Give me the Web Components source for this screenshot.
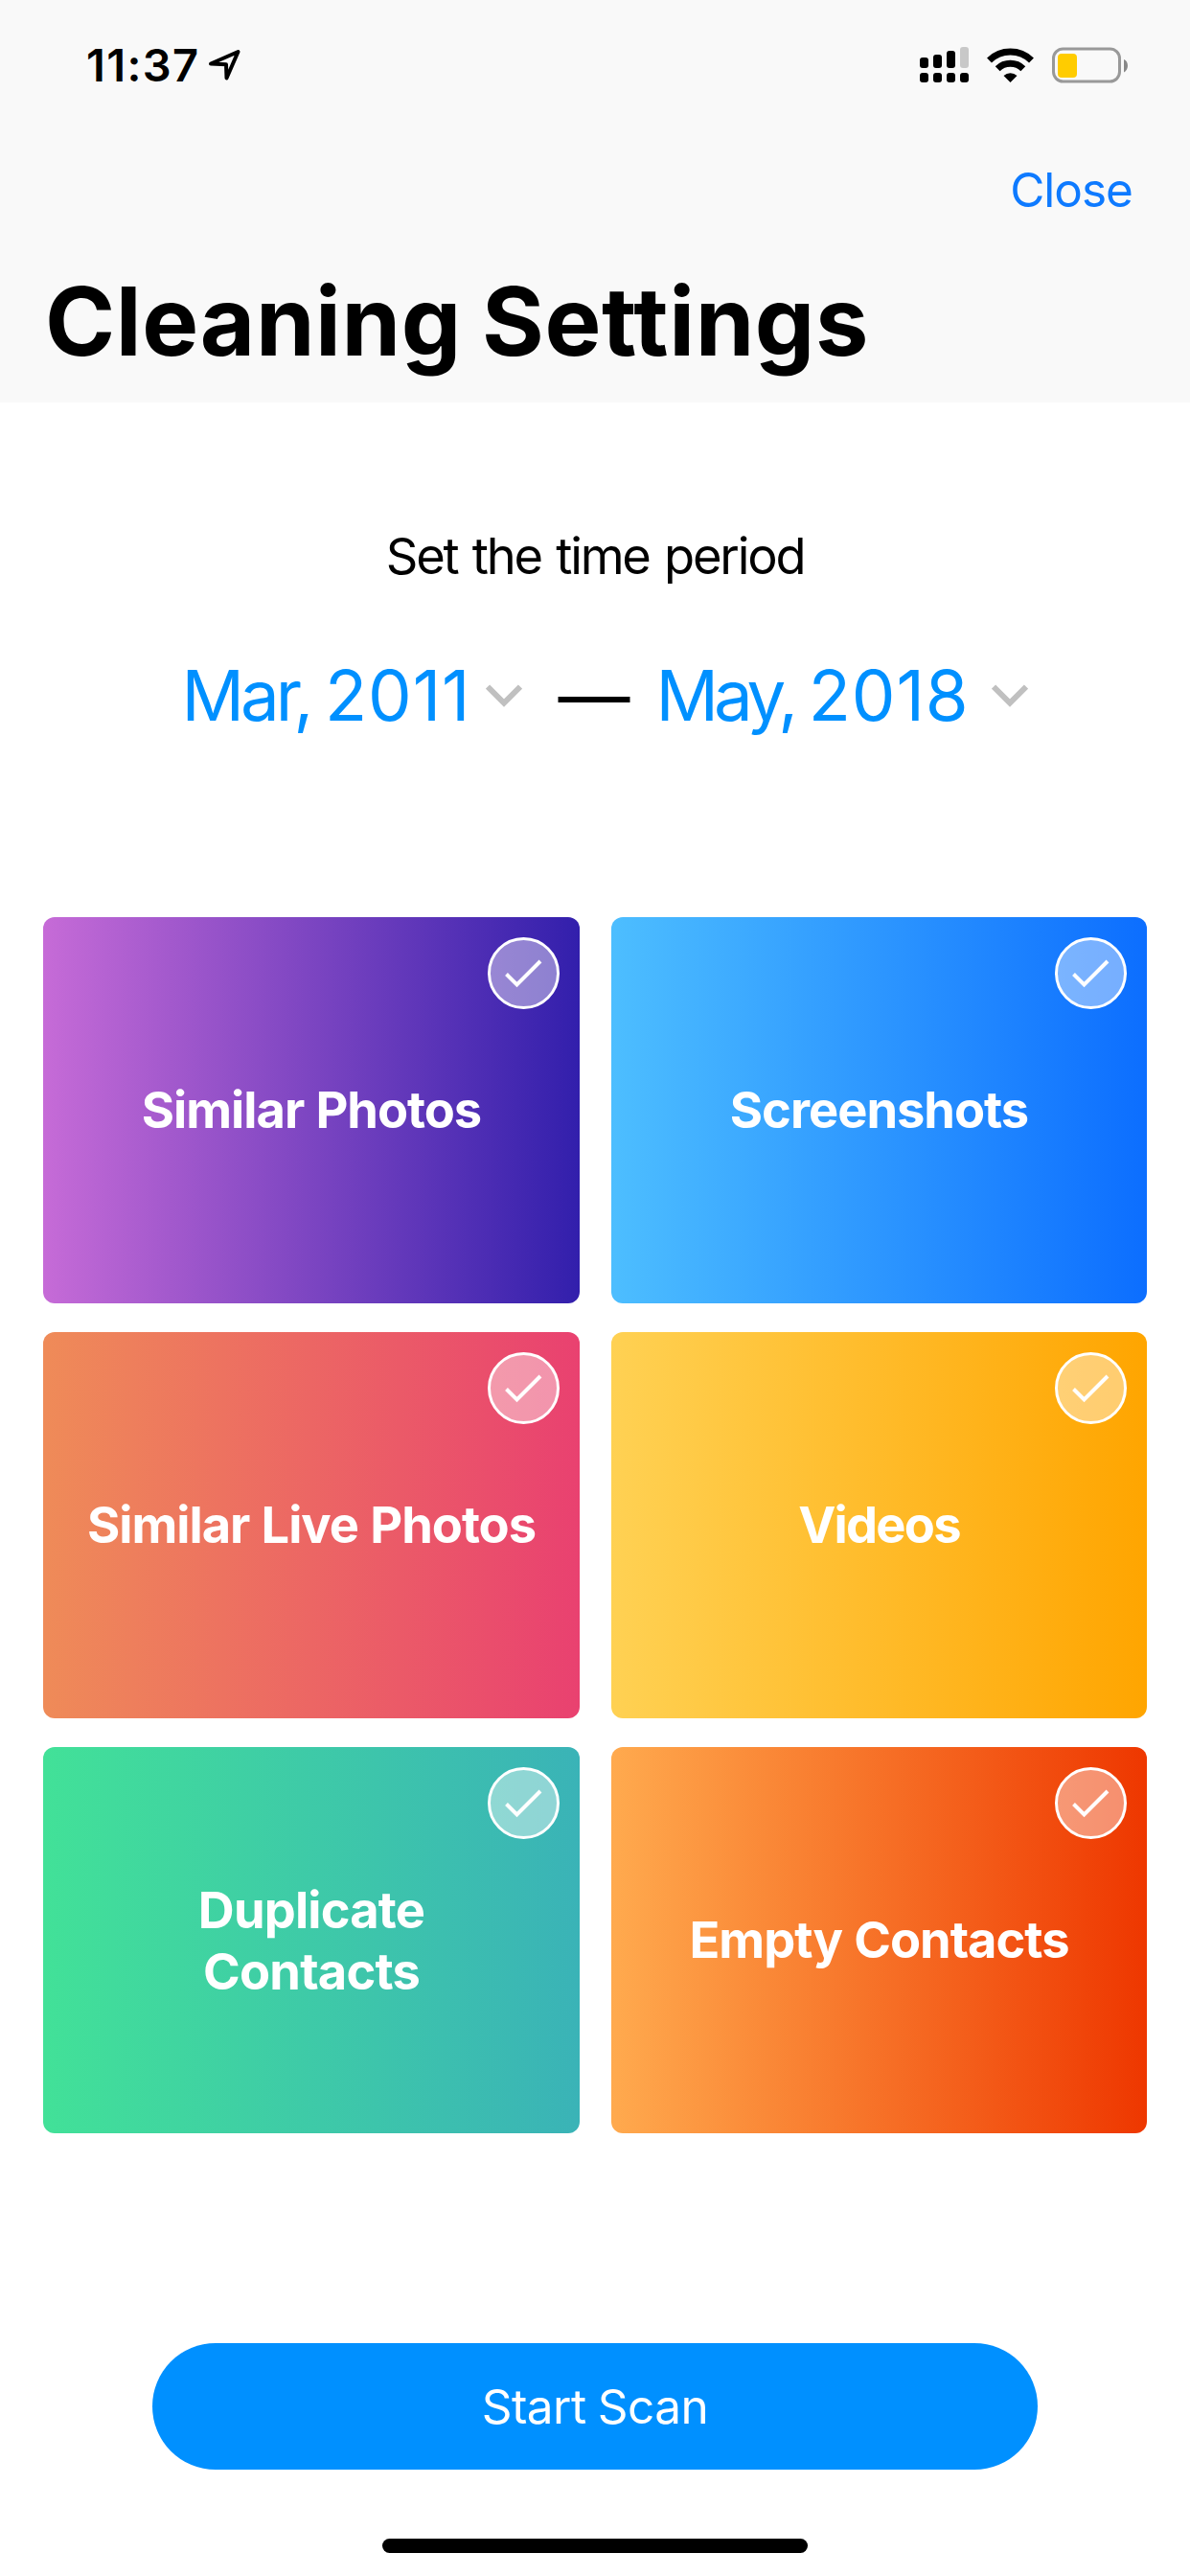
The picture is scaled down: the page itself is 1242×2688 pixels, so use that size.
<!DOCTYPE html>
<html lang="en">
<head>
<meta charset="utf-8">
<title>Cleaning Settings</title>
<style>
    html, body {
        margin: 0;
        background: #fff;
    }

    body {
        width: 1242px;
        height: 2688px;
        overflow: hidden;
        color: #000;
        font-family: Inter, "Liberation Sans", sans-serif;
        --clr-link: #0e7aff;
        --clr-accent: #0090ff;
        --clr-bar: #f9f9f9;
    }
</style>
</head>
<body>

<cleaning-screen>
    <status-bar slot="header" time="11:37"></status-bar>
    <nav-bar slot="header" action="Close">Cleaning Settings</nav-bar>

    <time-period label="Set the time period">
        <date-picker style="--gap: 16px; --track: -4px"><span>Mar,</span> 2011</date-picker>
        <date-picker slot="end" style="--gap: 23px; --track: -5px"><span>May,</span> 2018</date-picker>
    </time-period>

    <category-grid>
        <category-card from="#c66bd7" to="#321fac">Similar Photos</category-card>
        <category-card from="#4dbeff" to="#0c6eff">Screenshots</category-card>
        <category-card from="#ef8b58" to="#e94170">Similar Live Photos</category-card>
        <category-card from="#ffd153" to="#ffa500" style="--track: -1.74px">Videos</category-card>
        <category-card from="#42e198" to="#3ab3b7" style="--track: -0.8px; padding-bottom: 0">Duplicate<br>Contacts</category-card>
        <category-card from="#ffaa4e" to="#ee3700">Empty Contacts</category-card>
    </category-grid>

    <scan-button slot="footer">Start Scan</scan-button>
    <home-indicator slot="footer"></home-indicator>
</cleaning-screen>

<script>
class CleaningScreen extends HTMLElement {
    constructor() {
        super();
        const host = this.attachShadow({ mode: 'open' });
        host.innerHTML = `
            <style>
            :host {
                display: flex;
                flex-direction: column;
                height: 2688px;
            }

            header {
                height: 420px;
                background: var(--clr-bar);
            }

            main {
                flex: 1;
            }

            footer {
                display: flex;
                flex-direction: column;
                align-items: center;
                gap: 72px;
                padding-bottom: 24px;
            }
            </style>
            <header><slot name="header"></slot></header>
            <main><slot></slot></main>
            <footer><slot name="footer"></slot></footer>
        `;
    }
}

class StatusBar extends HTMLElement {
    constructor() {
        super();
        const host = this.attachShadow({ mode: 'open' });
        host.innerHTML = `
            <style>
            :host {
                display: flex;
                align-items: center;
                justify-content: space-between;
                box-sizing: border-box;
                height: 132px;
                padding: 4px 64px 0 90px;
            }

            .left, .right {
                display: flex;
                align-items: center;
            }

            .time {
                font-size: 47px;
                font-weight: 600;
                line-height: 56px;
                letter-spacing: 1.34px;
            }

            .arrow { margin-left: 8px; }
            .wifi { margin: 0 19px 0 18px; }
            svg { display: block; }
            </style>
            <div class="left">
                <span class="time"></span>
                <svg class="arrow" width="36" height="36" viewBox="0 0 36 36">
                    <path d="M4 16.500 L32.500 4 L20.500 31.500 L20 17.200 Z" fill="none" stroke="#000" stroke-width="4" stroke-linejoin="round"/>
                </svg>
            </div>
            <div class="right">
                <svg width="52" height="38" viewBox="0 0 52 38">
                    <rect x="0" y="11" width="9" height="11" rx="3"/>
                    <rect x="14" y="8" width="9" height="14" rx="3"/>
                    <rect x="28" y="4" width="9" height="18" rx="3"/>
                    <rect x="42" y="0" width="9" height="22" rx="3" fill="#c8c8c8"/>
                    <rect x="0" y="27" width="9" height="10" rx="3"/>
                    <rect x="14" y="27" width="9" height="10" rx="3"/>
                    <rect x="28" y="27" width="9" height="10" rx="3"/>
                    <rect x="42" y="27" width="9" height="10" rx="3"/>
                </svg>
                <svg class="wifi" width="49" height="38" viewBox="0 0 49 38">
                    <g fill="none" stroke="#000" stroke-width="7">
                        <path d="M2.500 14 A31.500 31.500 0 0 1 46.500 14"/>
                        <path d="M11.200 22.800 A19 19 0 0 1 37.800 22.800"/>
                    </g>
                    <path d="M17.500 30 A10.500 10.500 0 0 1 31.500 30 L24.500 37 Z"/>
                </svg>
                <svg width="80" height="38" viewBox="0 0 80 38">
                    <rect x="1.500" y="2" width="69" height="34" rx="10" fill="none" stroke="#999" stroke-width="3"/>
                    <rect x="6" y="7" width="20" height="25" rx="4" fill="#fc0"/>
                    <path d="M75 13 C80.300 15 80.300 24 75 26.500 Z" fill="#888"/>
                </svg>
            </div>
        `;
        this._time = host.querySelector('.time');
    }

    connectedCallback() {
        this._time.textContent = this.getAttribute('time');
    }
}

class NavBar extends HTMLElement {
    constructor() {
        super();
        const host = this.attachShadow({ mode: 'open' });
        host.innerHTML = `
            <style>
            :host { display: block; }

            .bar {
                display: flex;
                align-items: center;
                justify-content: flex-end;
                height: 132px;
                padding-right: 60px;
            }

            .action {
                color: var(--clr-link);
                font-size: 49.5px;
                letter-spacing: -0.99px;
            }

            h1 {
                margin: 0;
                padding-left: 47px;
                font-size: 99px;
                font-weight: 700;
                line-height: 142px;
                letter-spacing: 0.6px;
                word-spacing: -3px;
            }
            </style>
            <div class="bar"><span class="action"></span></div>
            <h1><slot></slot></h1>
        `;
        this._action = host.querySelector('.action');
    }

    connectedCallback() {
        this._action.textContent = this.getAttribute('action');
    }
}

class TimePeriod extends HTMLElement {
    constructor() {
        super();
        const host = this.attachShadow({ mode: 'open' });
        host.innerHTML = `
            <style>
            :host {
                display: block;
                padding-top: 128px;
            }

            .label {
                font-size: 52.4px;
                line-height: 64px;
                letter-spacing: -2.19px;
                word-spacing: 2.8px;
                text-align: center;
            }

            .range {
                display: flex;
                align-items: center;
                height: 91px;
                margin-top: 68px;
                padding-left: 189.5px;
            }

            .dash {
                margin: 0 27px 0 37px;
                font-size: 75px;
                line-height: 91px;
            }
            </style>
            <div class="label"></div>
            <div class="range">
                <slot></slot>
                <span class="dash">—</span>
                <slot name="end"></slot>
            </div>
        `;
        this._label = host.querySelector('.label');
    }

    connectedCallback() {
        this._label.textContent = this.getAttribute('label');
    }
}

class DatePicker extends HTMLElement {
    constructor() {
        super();
        const host = this.attachShadow({ mode: 'open' });
        host.innerHTML = `
            <style>
            :host {
                display: flex;
                align-items: center;
                gap: var(--gap);
                color: var(--clr-accent);
                font-size: 72.5px;
                line-height: 91px;
                letter-spacing: 0.9px;
                word-spacing: -5.7px;
                white-space: nowrap;
            }

            /* the month is set tighter than the year */
            ::slotted(span) { letter-spacing: var(--track); }
            </style>
            <div><slot></slot></div>
            <svg width="38" height="24" viewBox="0 0 38 24">
                <path d="M2 2.500 L19 19.500 L36 2.500" fill="none" stroke="#c0c0c0" stroke-width="6"/>
            </svg>
        `;
    }
}

class CategoryGrid extends HTMLElement {
    constructor() {
        super();
        const host = this.attachShadow({ mode: 'open' });
        host.innerHTML = `
            <style>
            :host {
                display: grid;
                grid-template-columns: 560px 559px;
                grid-auto-rows: 403px;
                gap: 30px 33px;
                margin-top: 186px;
                padding-left: 45px;
            }
            </style>
            <slot></slot>
        `;
    }
}

class CategoryCard extends HTMLElement {
    constructor() {
        super();
        const host = this.attachShadow({ mode: 'open' });
        host.innerHTML = `
            <style>
            :host {
                display: flex;
                align-items: center;
                justify-content: center;
                position: relative;
                padding-bottom: 2px;
                border-radius: 12px;
                background: linear-gradient(to right, var(--from), var(--to));
                color: #fff;
                font-size: 52.4px;
                font-weight: 700;
                line-height: 64px;
                letter-spacing: var(--track, -1.01px);
                word-spacing: 0.8px;
                text-align: center;
            }

            .badge {
                position: absolute;
                top: 21px;
                right: 21px;
            }
            </style>
            <span><slot></slot></span>
            <svg class="badge" width="75" height="75" viewBox="0 0 75 75">
                <circle cx="37.500" cy="37.500" r="36" fill="#fff" fill-opacity=".43" stroke="#fff" stroke-width="3"/>
                <path d="M19.500 38.500 L30.500 49.500 L55 25" fill="none" stroke="#fff" stroke-width="4"/>
            </svg>
        `;
    }

    connectedCallback() {
        this.style.setProperty('--from', this.getAttribute('from'));
        this.style.setProperty('--to', this.getAttribute('to'));
    }
}

class ScanButton extends HTMLElement {
    constructor() {
        super();
        const host = this.attachShadow({ mode: 'open' });
        host.innerHTML = `
            <style>
            :host { display: block; }

            button {
                display: block;
                width: 924px;
                height: 132px;
                padding: 0;
                border: 0;
                border-radius: 66px;
                background: var(--clr-accent);
                color: #fff;
                font: 400 49.5px/132px Inter, "Liberation Sans", sans-serif;
                letter-spacing: -0.55px;
                word-spacing: -1.1px;
            }
            </style>
            <button><slot></slot></button>
        `;
    }
}

class HomeIndicator extends HTMLElement {
    constructor() {
        super();
        const host = this.attachShadow({ mode: 'open' });
        host.innerHTML = `
            <style>
            :host {
                display: block;
                width: 444px;
                height: 15px;
                border-radius: 8px;
                background: #000;
            }
            </style>
        `;
    }
}

customElements.define('cleaning-screen', CleaningScreen);
customElements.define('status-bar', StatusBar);
customElements.define('nav-bar', NavBar);
customElements.define('time-period', TimePeriod);
customElements.define('date-picker', DatePicker);
customElements.define('category-grid', CategoryGrid);
customElements.define('category-card', CategoryCard);
customElements.define('scan-button', ScanButton);
customElements.define('home-indicator', HomeIndicator);
</script>
</body>
</html>
